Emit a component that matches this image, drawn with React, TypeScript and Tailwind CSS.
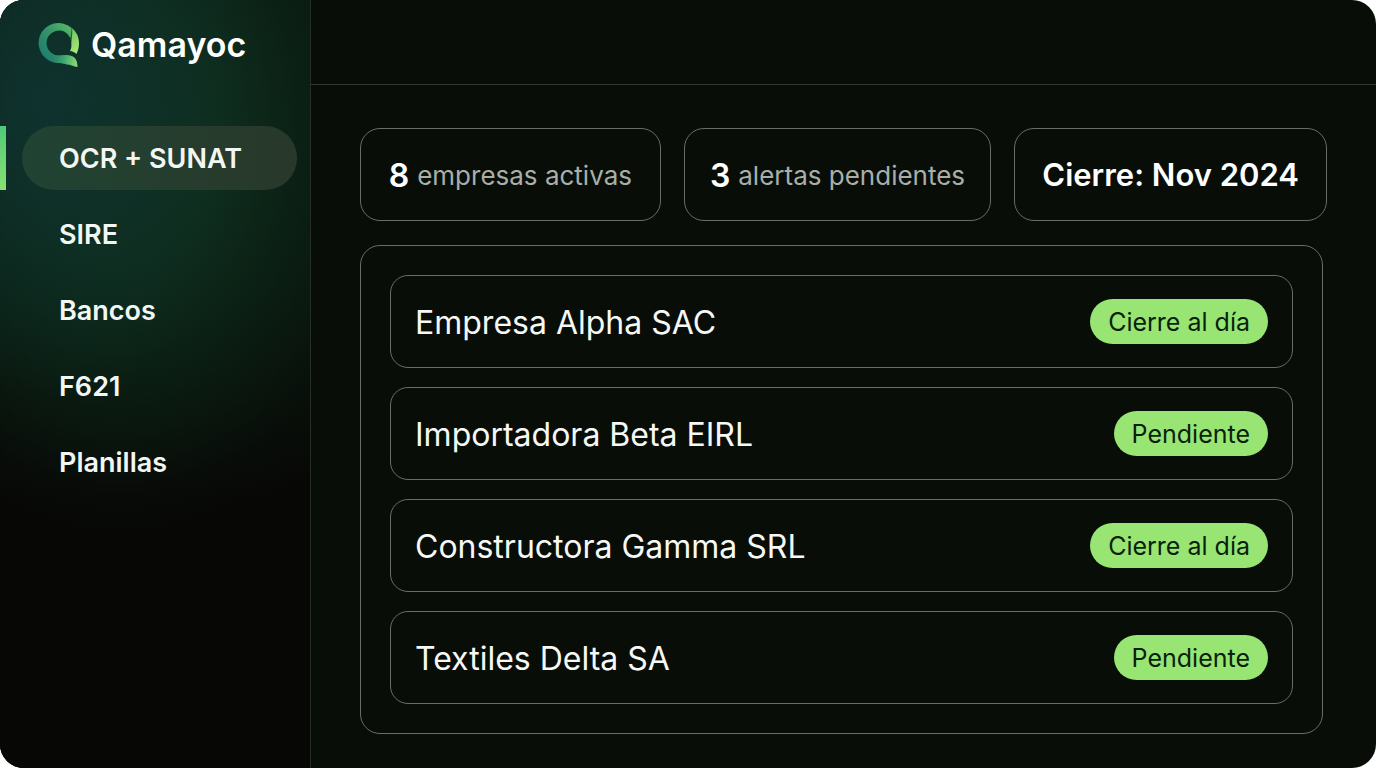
import { clsx } from "clsx";

const navItems = [
  { label: "OCR + SUNAT", href: "#ocr", active: true },
  { label: "SIRE", href: "#sire" },
  { label: "Bancos", href: "#bancos" },
  { label: "F621", href: "#f621" },
  { label: "Planillas", href: "#planillas" },
];

const stats = [
  { value: "8", label: "empresas activas" },
  { value: "3", label: "alertas pendientes" },
];

const companies = [
  { name: "Empresa Alpha SAC", status: "Cierre al día" },
  { name: "Importadora Beta EIRL", status: "Pendiente" },
  { name: "Constructora Gamma SRL", status: "Cierre al día" },
  { name: "Textiles Delta SA", status: "Pendiente" },
];

function Logo() {
  return (
    <svg viewBox="0 0 42 46" className="h-[46px] w-[42px]" aria-hidden="true">
      <defs>
        <linearGradient id="ring" gradientUnits="userSpaceOnUse" x1="4" y1="30" x2="34" y2="6">
          <stop offset="0" stopColor="#237f6e" />
          <stop offset="0.5" stopColor="#369668" />
          <stop offset="1" stopColor="#55b865" />
        </linearGradient>
        <linearGradient id="tail" gradientUnits="userSpaceOnUse" x1="14" y1="36" x2="40" y2="43">
          <stop offset="0" stopColor="#2b8a70" stopOpacity="0" />
          <stop offset="0.45" stopColor="#41a86e" />
          <stop offset="1" stopColor="#90df74" />
        </linearGradient>
        <linearGradient id="leaf" x1="0" y1="0" x2="0.3" y2="1">
          <stop offset="0" stopColor="#69c062" />
          <stop offset="1" stopColor="#a6e873" />
        </linearGradient>
      </defs>
      {/* ring */}
      <path
        d="M34 6.2A20 20 0 1 0 21 41C24 41 27 42 30 43L30 33.200C27 32.800 24 33.500 21 33.500A12.500 12.500 0 1 1 32.500 16.200Z"
        fill="url(#ring)"
      />
      {/* tail */}
      <path d="M14 39.500V31.500C17 33.500 20 33.600 24 33.200C34 32 39.500 34.500 39.500 45C32 43.500 28 41 21 41C18.500 41 16 40.500 14 39.500Z" fill="url(#tail)" />
      {/* leaf */}
      <path d="M33.500 5.700C38.500 9.500 41 15 41 21C41 25 40.200 28.500 38.500 32C36.500 30.200 34.500 29.200 32 29C33.500 26.500 33.500 24 33.300 21C33.500 16 34.500 11 33.500 5.700Z" fill="url(#leaf)" />
      <path d="M33.500 5.700C34.800 11 33 15 32.600 18" fill="none" stroke="#236b48" strokeWidth="0.700" />
    </svg>
  );
}

function Sidebar() {
  return (
    <aside className="w-[311px] shrink-0 border-r border-[#252d28] bg-[#070705] bg-[radial-gradient(ellipse_230px_300px_at_40px_100px,#10353a99_0%,#0e322f66_50%,transparent_100%),radial-gradient(ellipse_320px_430px_at_120px_130px,#0e3022_0%,#0e2d1d_30%,#0b2014cc_60%,#090f0a66_85%,transparent_100%),linear-gradient(to_bottom,#0b1a12_0%,#0a160e_35%,#070705_65%)]">
      <div className="flex h-[90px] items-center gap-[11px] pl-[38px]">
        <Logo />
        <span className="text-[34px] leading-none font-semibold">Qamayoc</span>
      </div>
      <nav className="mt-9 flex flex-col gap-3">
        {navItems.map((item) => (
          <div key={item.label} className="flex h-16 gap-4 pr-[13px]">
            <span
              className={clsx("w-1.5", item.active && "bg-linear-to-b from-[#4fca78] to-[#86e070]")}
            />
            <a
              href={item.href}
              aria-current={item.active ? "page" : undefined}
              className={clsx(
                "flex flex-1 items-center rounded-full pt-0.5 pl-[37px] text-[27px] font-semibold text-[#f3f7f3]",
                item.active && "bg-linear-to-r from-[#204333] to-[#28382a]"
              )}
            >
              {item.label}
            </a>
          </div>
        ))}
      </nav>
    </aside>
  );
}

export default function App() {
  return (
    <div className="min-h-screen bg-white font-[Inter,sans-serif]">
      <div className="flex min-h-screen overflow-hidden rounded-3xl bg-[#080d08] text-white">
        <Sidebar />

        <div className="flex min-w-0 flex-1 flex-col">
          <header className="h-[85px] border-b border-[#2f3731]" />

          <main className="flex flex-col gap-6 pt-[43px] pr-[49px] pb-[34px] pl-[49px]">
            {/* Summary */}
            <section className="grid grid-cols-[301fr_308fr_313fr] gap-[23px]">
              {stats.map((stat) => (
                <div
                  key={stat.label}
                  className="flex h-[93px] items-center justify-center gap-2 rounded-[20px] border border-[#686d69] pt-0.5 whitespace-nowrap"
                >
                  <span className="text-[32px] font-semibold">{stat.value}</span>
                  <span className="text-[26px] text-[#a9aea9]">{stat.label}</span>
                </div>
              ))}
              <div className="flex h-[93px] items-center justify-center rounded-[20px] border border-[#686d69] pt-0.5 text-[31px] font-semibold whitespace-nowrap">
                Cierre: Nov 2024
              </div>
            </section>

            {/* Companies */}
            <ul className="mr-1 flex flex-col gap-[19px] rounded-[20px] border border-[#686d69] p-[29px]">
              {companies.map((company) => (
                <li
                  key={company.name}
                  className="flex h-[93px] items-center justify-between rounded-[18px] border border-[#686d69] pr-6 pl-6"
                >
                  <span className="pt-0.5 text-[32px] text-[#f6f8f5]">{company.name}</span>
                  <span className="flex h-[45px] items-center rounded-full bg-[#98e574] px-[18px] pt-0.5 text-[25px] text-[#0a1f0c]">
                    {company.status}
                  </span>
                </li>
              ))}
            </ul>
          </main>
        </div>
      </div>
    </div>
  );
}
